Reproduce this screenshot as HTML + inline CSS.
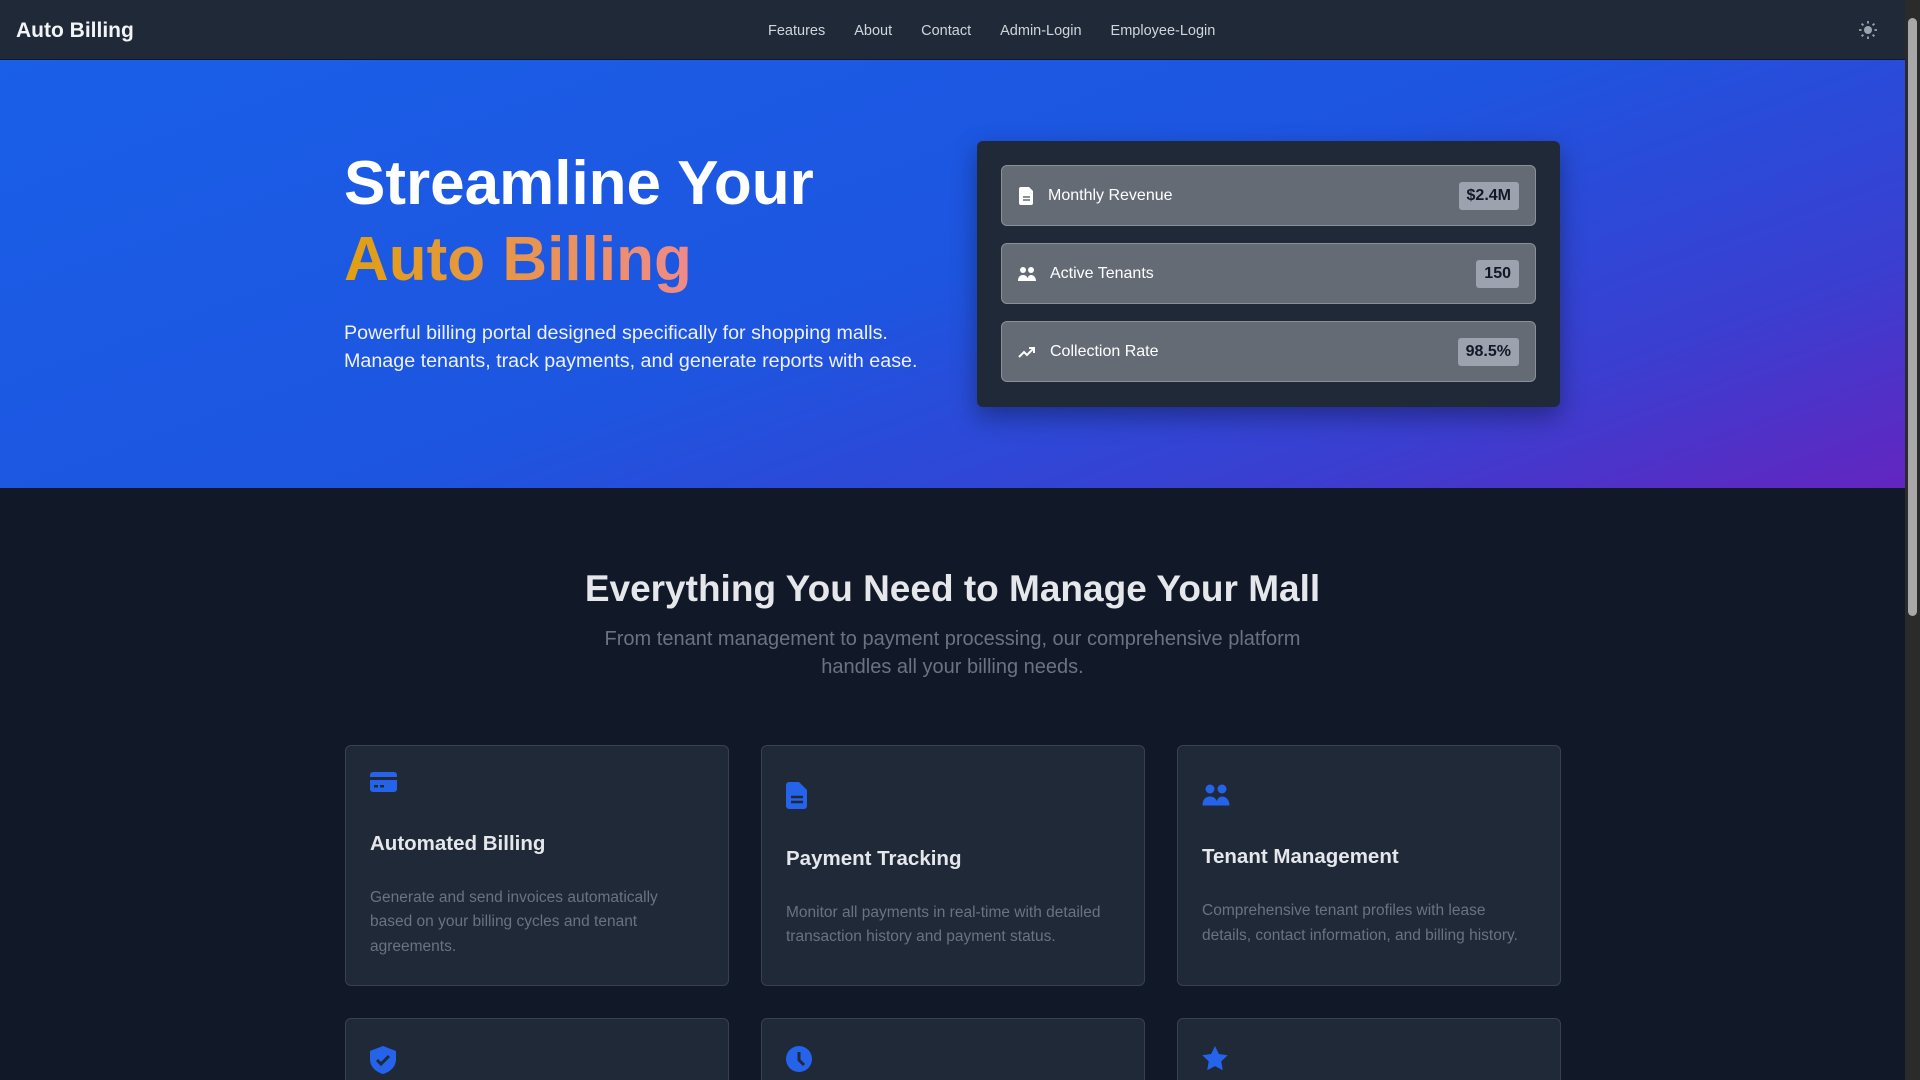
<!DOCTYPE html>
<html><head><meta charset="utf-8"><style>
*{margin:0;padding:0;box-sizing:border-box}
html,body{width:1920px;height:1080px;overflow:hidden;background:#111827;font-family:"Liberation Sans",sans-serif}
.page{position:absolute;left:0;top:0;width:1905px;height:1080px;overflow:hidden}
nav{height:60px;background:#1f2937;position:relative;border-bottom:1px solid #111827}
.logo{position:absolute;left:16px;top:19px;font-size:21px;font-weight:bold;color:#f3f4f6}
.links{position:absolute;left:768px;top:23px;font-size:14.5px;color:#d1d5db}
.links span{margin-right:29px}
.sun{position:absolute;left:1859px;top:21px}
.hero{height:428px;background:linear-gradient(160deg,#1a5fe8 0%,#1d55e0 50%,#3b3ed0 80%,#6325c0 100%);position:relative}
h1{position:absolute;left:344px;top:86px;font-size:62px;line-height:76px;font-weight:900;color:#fff}
.grad{background:linear-gradient(90deg,#e0a010,#f08a8a);-webkit-background-clip:text;background-clip:text;color:transparent}
.hp{position:absolute;left:344px;top:259px;font-size:19.7px;line-height:28px;color:#eef2ff}
.card{position:absolute;left:977px;top:81px;width:583px;height:266px;background:#1f2937;border-radius:6px;box-shadow:0 10px 25px rgba(0,0,0,.35);padding:24px}
.item{height:61px;background:#656b75;border:1px solid #8a9099;border-radius:6px;margin-bottom:17px;display:flex;align-items:center;padding:0 16px;color:#fff;font-size:16px}
.item svg{margin-right:14px}
.item .b{margin-left:auto;background:#9ca3af;color:#111827;font-weight:bold;font-size:16px;padding:5px 8px;border-radius:3px}
.sec{position:relative;height:592px}
h2{position:absolute;left:0;width:1905px;text-align:center;top:80px;font-size:37px;font-weight:900;color:#e5e7eb}
.sub{position:absolute;left:0;width:1905px;text-align:center;top:137px;font-size:20px;line-height:28px;color:#6b7280}
.fc{position:absolute;width:384px;background:#1f2937;border:1px solid #374151;border-radius:6px;padding:0 24px;display:flex;flex-direction:column;justify-content:center}
.fc h3{font-size:20.5px;font-weight:900;color:#e5e7eb;margin:38px 0 30px}
.fc p{font-size:15.5px;line-height:24.5px;color:#6b7280}
.sb{position:absolute;left:1905px;top:0;width:15px;height:1080px;background:#2b2b2b}
.thumb{position:absolute;left:3px;top:18px;width:9px;height:598px;background:#a8a8a8;border-radius:5px}
</style></head><body>
<div class="page">
<nav><div class="logo">Auto Billing</div>
<div class="links"><span>Features</span><span>About</span><span>Contact</span><span>Admin-Login</span><span>Employee-Login</span></div>
<svg class="sun" width="18" height="18" viewBox="0 0 18 18" fill="#9ca3af"><circle cx="9" cy="9" r="4"/><g stroke="#9ca3af" stroke-width="1.8"><path d="M9 0v2.5M9 15.5V18M0 9h2.5M15.5 9H18M2.6 2.6l1.8 1.8M13.6 13.6l1.8 1.8M2.6 15.4l1.8-1.8M13.6 4.4l1.8-1.8"/></g></svg>
</nav>
<div class="hero">
<h1>Streamline Your<br><span class="grad">Auto Billing</span></h1>
<div class="hp">Powerful billing portal designed specifically for shopping malls.<br>Manage tenants, track payments, and generate reports with ease.</div>
<div class="card">
<div class="item"><svg width="16" height="18" viewBox="0 0 16 18"><path d="M2 0h8l4 4v12a2 2 0 0 1-2 2H2a2 2 0 0 1-2-2V2a2 2 0 0 1 2-2z" fill="#fff" transform="translate(1,0)"/><path d="M5 10h7M5 13h7" stroke="#656b75" stroke-width="1.6"/></svg>Monthly Revenue<span class="b">$2.4M</span></div>
<div class="item"><svg width="18" height="16" viewBox="0 0 18 16" fill="#fff"><circle cx="5" cy="4" r="3"/><circle cx="13" cy="4" r="3"/><path d="M0 15c0-4 2-6 5-6s5 2 5 6zM9 15c0-3 1.5-6 4-6s5 2 5 6z"/></svg>Active Tenants<span class="b">150</span></div>
<div class="item"><svg width="18" height="14" viewBox="0 0 18 14" fill="none" stroke="#fff" stroke-width="2"><path d="M1 12l5-5 3 3 7-7M11 3h5v5"/></svg>Collection Rate<span class="b">98.5%</span></div>
</div>
</div>
<div class="sec">
<h2>Everything You Need to Manage Your Mall</h2>
<div class="sub">From tenant management to payment processing, our comprehensive platform<br>handles all your billing needs.</div>
<div class="fc" style="left:345px;top:257px;height:241px">
<svg width="27" height="22" viewBox="0 0 27 22"><rect x="0" y="0" width="27" height="20" rx="3" fill="#2563eb"/><rect x="0" y="5" width="27" height="3" fill="#1f2937"/><rect x="4" y="13" width="4" height="2.5" fill="#1f2937"/><rect x="10" y="13" width="4" height="2.5" fill="#1f2937"/></svg>
<h3>Automated Billing</h3><p>Generate and send invoices automatically based on your billing cycles and tenant agreements.</p></div>
<div class="fc" style="left:761px;top:257px;height:241px">
<svg width="22" height="27" viewBox="0 0 22 27"><path d="M3 0h10l8 8v16a3 3 0 0 1-3 3H3a3 3 0 0 1-3-3V3a3 3 0 0 1 3-3z" fill="#2563eb"/><path d="M5 15h12M5 20h12" stroke="#1f2937" stroke-width="2.4"/></svg>
<h3>Payment Tracking</h3><p>Monitor all payments in real-time with detailed transaction history and payment status.</p></div>
<div class="fc" style="left:1177px;top:257px;height:241px">
<svg width="28" height="24" viewBox="0 0 18 16" fill="#2563eb"><circle cx="5" cy="4" r="3"/><circle cx="13" cy="4" r="3"/><path d="M0 15c0-4 2-6 5-6s5 2 5 6zM9 15c0-3 1.5-6 4-6s5 2 5 6z"/></svg>
<h3>Tenant Management</h3><p>Comprehensive tenant profiles with lease details, contact information, and billing history.</p></div>
<div class="fc" style="left:345px;top:530px;height:200px;justify-content:flex-start;padding-top:27px"><svg width="26" height="28" viewBox="0 0 26 28"><path d="M13 0l13 5v8c0 8-6 13-13 15C6 26 0 21 0 13V5z" fill="#2563eb"/><path d="M7 14l4 4 8-8" stroke="#1f2937" stroke-width="3" fill="none"/></svg></div>
<div class="fc" style="left:761px;top:530px;height:200px;justify-content:flex-start;padding-top:27px"><svg width="26" height="26" viewBox="0 0 26 26"><circle cx="13" cy="13" r="13" fill="#2563eb"/><path d="M13 6v8l5 5" stroke="#1f2937" stroke-width="3" fill="none"/></svg></div>
<div class="fc" style="left:1177px;top:530px;height:200px;justify-content:flex-start;padding-top:27px"><svg width="26" height="25" viewBox="0 0 24 23"><path d="M12 0l3.6 7.4 8.1 1.1-5.9 5.7 1.4 8.1L12 18.5l-7.2 3.8 1.4-8.1L.3 8.5l8.1-1.1z" fill="#2563eb"/></svg></div>
</div>
</div>
<div class="sb"><div class="thumb"></div></div>
</body></html>
